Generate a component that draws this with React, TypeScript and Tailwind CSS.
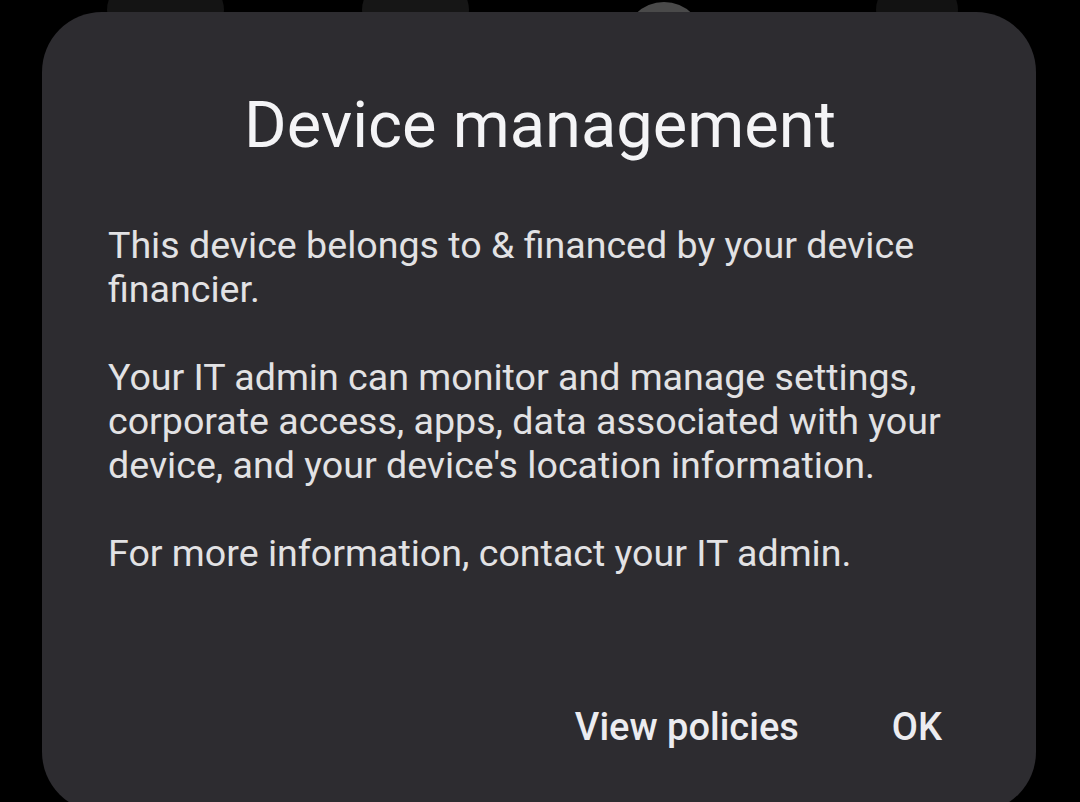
export default function App() {
  const font = { fontFamily: 'Roboto, "Noto Sans", sans-serif' }

  return (
    <div className="relative h-[802px] w-[1080px] overflow-hidden bg-black" style={font}>
      {/* blurred home screen icons peeking out behind the dialog */}
      <div className="absolute left-[107px] top-[-20px] h-[60px] w-[117px] rounded-full bg-[#141414]"></div>
      <div className="absolute left-[362px] top-[-20px] h-[60px] w-[107px] rounded-full bg-[#161616]"></div>
      <div className="absolute left-[624px] top-[2px] h-[80px] w-[80px] rounded-full bg-[#4a4a4a]"></div>
      <div className="absolute left-[876px] top-[-20px] h-[60px] w-[82px] rounded-full bg-[#121212]"></div>

      <div className="relative ml-[42px] mt-[12px] h-[800px] w-[994px] rounded-[60px] bg-[#2d2c30] pl-[66px] pr-[40px] pt-[75px]">
        <h1 className="-ml-[64px] -mr-[40px] text-center text-[65px] leading-[76px] text-[#f4f4f6]">
          Device management
        </h1>

        <div className="mt-[60px] text-[37.6px] leading-[44px] text-[#e2e2e4]">
          <p>This device belongs to &amp; financed by your device<br />financier.</p>
          <p className="mt-[44px]">
            Your IT admin can monitor and manage settings,<br />
            corporate access, apps, data associated with your<br />
            device, and your device's location information.
          </p>
          <p className="mt-[44px]">For more information, contact your IT admin.</p>
        </div>

        <div className="mt-[130px] mr-[54px] flex items-center justify-end gap-[93px] text-[38px] leading-[44px] font-medium text-[#ececf0]">
          <span>View policies</span>
          <span>OK</span>
        </div>
      </div>
    </div>
  )
}
